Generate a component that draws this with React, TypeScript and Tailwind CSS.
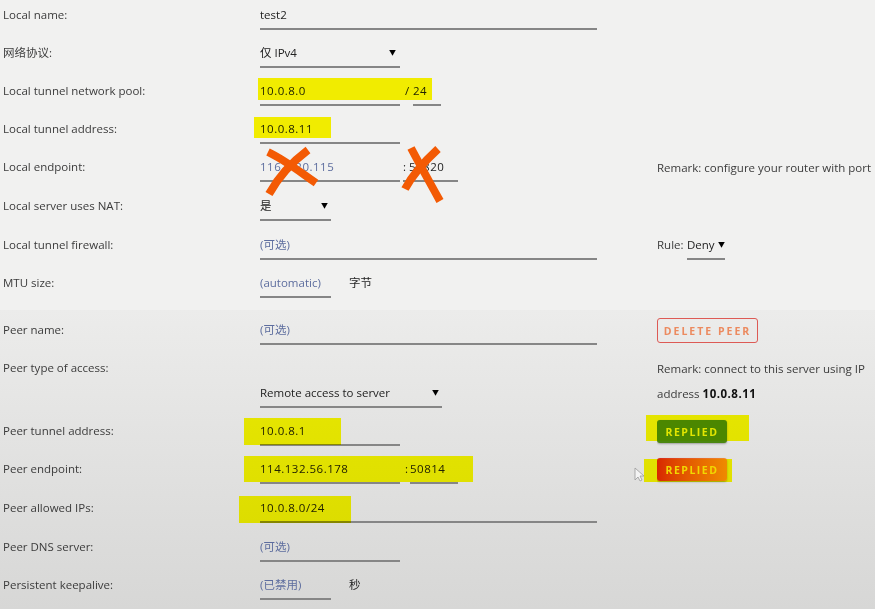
import React from "react";

const line = "flex items-start h-[23px] border-b-2 border-[#868686]";
const field = `${line} text-[#222]`;
const hint = `${line} text-[#5d6d9e]`;
const num = "tracking-[0.5px]";

function Row({
  label,
  h = "h-[38px]",
  children,
  right,
}: {
  label: string;
  h?: string;
  children?: React.ReactNode;
  right?: React.ReactNode;
}) {
  return (
    <div className={`flex ${h}`}>
      <div className="w-[260px] shrink-0 pl-[3px] pt-[7px] text-[#3b3b3b]">{label}</div>
      <div className="w-[397px] shrink-0 pt-[7px] flex items-start">{children}</div>
      <div className="flex-1 overflow-hidden whitespace-nowrap">{right}</div>
    </div>
  );
}

function Arrow() {
  return <span className="text-[7px] text-black leading-4">▼</span>;
}

export default function App() {
  return (
    <div className="relative w-[875px] h-[609px] overflow-hidden bg-[#f1f1f0] text-[11.5px] leading-4 font-['Open_Sans','Noto_Sans_CJK_SC',sans-serif]">
      {/* Local section */}
      <div className="h-[310px]">
        <Row label="Local name:">
          <div className={`${field} w-[337px]`}>test2</div>
        </Row>
        <Row label="网络协议:">
          <div className={`${field} w-[140px] justify-between pr-[4px]`}>
            <span>仅 IPv4</span>
            <Arrow />
          </div>
        </Row>
        <Row label="Local tunnel network pool:">
          <div className={`${field} ${num} w-[140px]`}>10.0.8.0</div>
          <span className="ml-[5px] w-[8px] text-[#222]">/</span>
          <div className={`${field} ${num} w-[28px]`}>24</div>
        </Row>
        <Row label="Local tunnel address:">
          <div className={`${field} ${num} w-[140px]`}>10.0.8.11</div>
        </Row>
        <Row
          label="Local endpoint:"
          h="h-[39px]"
          right={<div className="pt-[8px] text-[#3b3b3b]">Remark: configure your router with port</div>}
        >
          <div className={`${hint} ${num} w-[140px]`}>116.7.20.115</div>
          <div className={`${field} ${num} w-[55px] ml-[3px]`}>:&thinsp;51820</div>
        </Row>
        <Row label="Local server uses NAT:" h="h-[39px]">
          <div className={`${field} w-[71px] justify-between pr-[3px]`}>
            <span>是</span>
            <Arrow />
          </div>
        </Row>
        <Row
          label="Local tunnel firewall:"
          right={
            <div className="flex items-start pt-[7px] text-[#3b3b3b]">
              <span className="w-[30px]">Rule:</span>
              <div className="flex h-[23px] w-[38px] justify-between border-b-2 border-[#868686] text-[#222]">
                <span>Deny</span>
                <Arrow />
              </div>
            </div>
          }
        >
          <div className={`${hint} w-[337px]`}>(可选)</div>
        </Row>
        <Row label="MTU size:">
          <div className={`${hint} w-[71px]`}>(automatic)</div>
          <span className="ml-[18px] text-[#222]">字节</span>
        </Row>
      </div>

      {/* Peer section */}
      <div className="h-[299px] pt-[5px] bg-gradient-to-b from-[#ececeb] to-[#d7d7d6]">
        <Row
          label="Peer name:"
          right={
            <div className="pt-[3px]">
              <button className="h-[25px] w-[101px] rounded-[3px] border-[1.5px] border-[#dd5a55] text-[10.5px] font-bold tracking-[2px] text-[#ec8a5f]">
                DELETE PEER
              </button>
            </div>
          }
        >
          <div className={`${hint} w-[337px]`}>(可选)</div>
        </Row>
        <div className="flex h-[63px]">
          <div className="w-[260px] shrink-0 pl-[3px] pt-[7px] text-[#3b3b3b]">Peer type of access:</div>
          <div className="w-[397px] shrink-0 pt-[32px]">
            <div className={`${field} w-[182px] justify-between pr-[3px]`}>
              <span>Remote access to server</span>
              <Arrow />
            </div>
          </div>
          <div className="flex-1 whitespace-nowrap pt-[3px] leading-[25px] text-[#3b3b3b]">
            <div>Remark: connect to this server using IP</div>
            <div>
              address <span className={`font-bold text-[#111] ${num}`}>10.0.8.11</span>
            </div>
          </div>
        </div>
        <Row
          label="Peer tunnel address:"
          right={
            <div className="pt-[4px]">
              <button className="h-[23px] w-[70px] rounded-[3px] bg-[#4b870f] text-[10.5px] font-bold tracking-[1.5px] text-[#e2e600] shadow-[0_1px_2px_rgba(0,0,0,0.3)]">
                REPLIED
              </button>
            </div>
          }
        >
          <div className={`${field} ${num} w-[140px]`}>10.0.8.1</div>
        </Row>
        <Row
          label="Peer endpoint:"
          h="h-[39px]"
          right={
            <div className="pt-[4px]">
              <button className="h-[23px] w-[70px] rounded-[3px] bg-gradient-to-r from-[#d8261a] to-[#ef8a2c] text-[10.5px] font-bold tracking-[1.5px] text-[#f6d91c] shadow-[0_1px_2px_rgba(0,0,0,0.3)]">
                REPLIED
              </button>
            </div>
          }
        >
          <div className={`${field} ${num} w-[140px]`}>114.132.56.178</div>
          <span className="ml-[5px] w-[5px] text-[#222]">:</span>
          <div className={`${field} ${num} w-[48px]`}>50814</div>
        </Row>
        <Row label="Peer allowed IPs:" h="h-[39px]">
          <div className={`${field} ${num} w-[337px]`}>10.0.8.0/24</div>
        </Row>
        <Row label="Peer DNS server:">
          <div className={`${hint} w-[140px]`}>(可选)</div>
        </Row>
        <Row label="Persistent keepalive:">
          <div className={`${hint} w-[71px]`}>(已禁用)</div>
          <span className="ml-[18px] text-[#222]">秒</span>
        </Row>
      </div>

      {/* highlighter marks */}
      <div className="pointer-events-none absolute left-[258px] top-[78px] h-[22px] w-[174px] bg-[#f6ec00] mix-blend-darken" />
      <div className="pointer-events-none absolute left-[254px] top-[117px] h-[21px] w-[77px] bg-[#f6ec00] mix-blend-darken" />
      <div className="pointer-events-none absolute left-[244px] top-[418px] h-[27px] w-[97px] bg-[#f0ea00] mix-blend-darken" />
      <div className="pointer-events-none absolute left-[244px] top-[456px] h-[26px] w-[229px] bg-[#f0ea00] mix-blend-darken" />
      <div className="pointer-events-none absolute left-[239px] top-[496px] h-[27px] w-[112px] bg-[#f0ea00] mix-blend-darken" />
      <div className="pointer-events-none absolute left-[646px] top-[415px] h-[26px] w-[103px] bg-[#f0ea00] mix-blend-darken" />
      <div className="pointer-events-none absolute left-[644px] top-[459px] h-[23px] w-[88px] bg-[#f0ea00] mix-blend-darken" />

      {/* crossed-out marks */}
      <svg className="pointer-events-none absolute left-0 top-0" width="875" height="609">
        <g stroke="#f35a04" strokeWidth="8" strokeLinecap="butt" fill="none">
          <path d="M268 152 C285 160 300 172 316 183" />
          <path d="M308 150 C292 162 279 176 269 194" />
          <path d="M438 149 C426 160 414 172 405 189" />
          <path d="M411 148 C420 165 430 183 440 201" />
        </g>
        {/* mouse pointer */}
        <path d="M635 468 L635 480 L638 477 L640 481 L642 480 L640 476 L644 476 Z" fill="#f4f4f4" stroke="#9a9a9a" strokeWidth="0.8" />
      </svg>
    </div>
  );
}
